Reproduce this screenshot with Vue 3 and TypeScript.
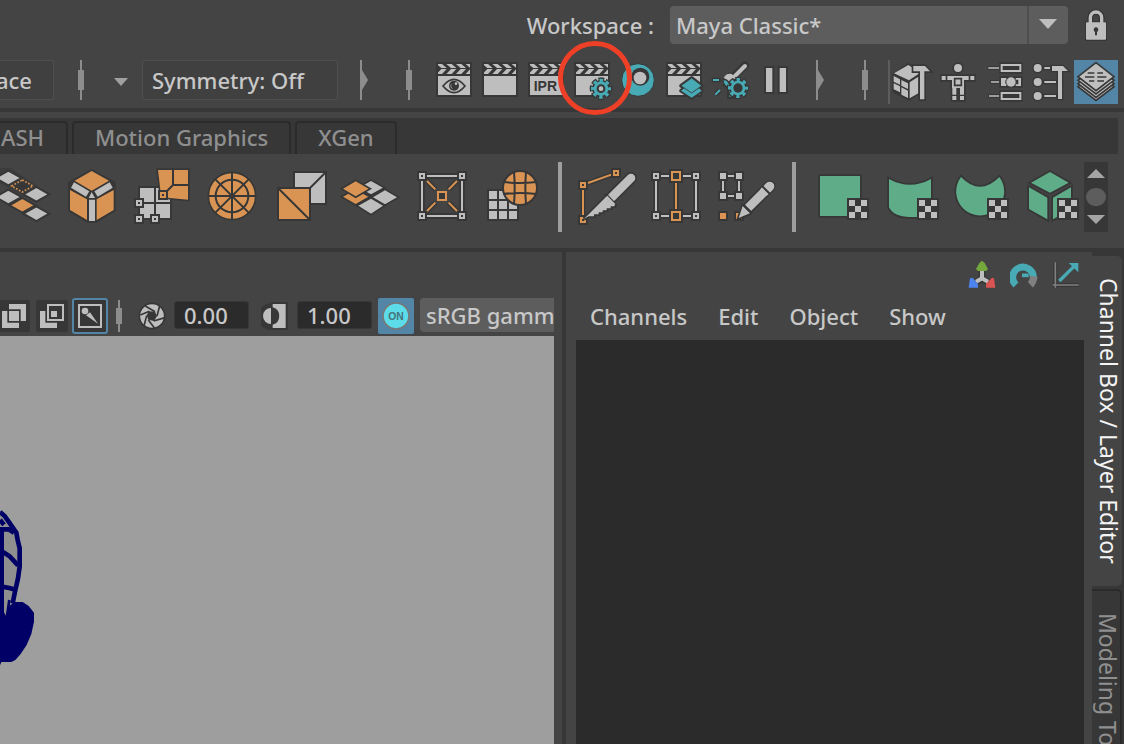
<script setup lang="ts">
import { ref } from 'vue'

const workspace = ref('Maya Classic*')
const exposure = ref('0.00')
const gamma = ref('1.00')
const colorSpace = ref('sRGB gamm')

const shelfTabs = ['ASH', 'Motion Graphics', 'XGen']
const menus = ['Channels', 'Edit', 'Object', 'Show']
const greenShapes = [
  { name: 'Planar mapping', parts: ['M36 42H156V162H36Z'] },
  { name: 'Cylindrical mapping', parts: ['M33 51Q96 86 159 51V165H96Q48 165 33 136Z'] },
  { name: 'Spherical mapping', parts: ['M39 45Q96 104 154 45A72 72 0 1 1 39 45Z'] },
  {
    name: 'Automatic mapping',
    parts: ['M96 30 152 62 96 92 39 62Z', 'M33 76 88 107V172L33 141Z', 'M105 107 159 76V141L105 172Z'],
  },
]
const corners = [[36, 42], [156, 42], [36, 162], [156, 162]]
const diamonds = [
  [55, 48, 'lt'], [139, 97, 'lt'], [55, 105, 'lt'], [97, 130, 'or'], [139, 155, 'lt'],
]
</script>

<template>
  <svg class="defs" aria-hidden="true">
    <defs>
      <clipPath id="slate"><path d="M21 12H117V42H21Z" /></clipPath>
      <symbol id="clapper" viewBox="0 0 138 132">
        <path class="dk" d="M15 6H123V111H15Z" />
        <path class="lt" d="M21 48H117V105H21Z" />
        <g clip-path="url(#slate)">
          <path
            v-for="a in [-12, 17, 46, 75, 104]"
            :key="a"
            class="lt"
            :d="`M${a} 12h16l14 12h-16zM${a + 14} 27h16l-14 15h-16z`"
          />
        </g>
      </symbol>
      <symbol id="gear" viewBox="-40 -40 80 80">
        <circle class="dk" r="27" />
        <circle r="25" fill="none" stroke="#373737" stroke-width="18" stroke-dasharray="15 4.63" stroke-dashoffset="7.5" />
        <circle class="tl" r="22" />
        <circle r="25" fill="none" stroke="#48aab5" stroke-width="10" stroke-dasharray="10 9.63" stroke-dashoffset="5" />
      </symbol>
      <symbol id="checker" viewBox="0 0 66 66">
        <path class="dk" d="M0 0H66V66H0Z" />
        <path class="lt" d="M6 6h18v18H6zM42 6h18v18H42zM24 24h18v18H24zM6 42h18v18H6zM42 42h18v18H42z" />
      </symbol>
    </defs>
  </svg>

  <main class="app">
    <header class="workspace-bar">
      <label for="workspace">Workspace :</label>
      <div class="workspace-pick">
        <select id="workspace" v-model="workspace">
          <option>Maya Classic*</option>
        </select>
      </div>
      <button class="lock" aria-label="Lock workspace">
        <svg viewBox="0 0 72 96" width="24" height="32">
          <path d="M19 42V26a17 17 0 0 1 34 0V42" fill="none" stroke="#373737" stroke-width="18" />
          <path class="dk" d="M3 37H69V96H3Z" />
          <path d="M19 44V26a17 17 0 0 1 34 0V44" fill="none" stroke="#bebebe" stroke-width="10" />
          <rect class="lt" x="6" y="40" width="60" height="52" rx="3" />
          <circle class="dk" cx="36" cy="62" r="7" /><path class="dk" d="M33 64h6v15h-6z" />
        </svg>
      </button>
    </header>

    <section class="status-line" aria-label="Status line">
      <button class="box space">ace</button>
      <i class="handle"></i>
      <i class="caret"></i>
      <button class="box symmetry">Symmetry: Off</button>
      <i class="collapse"></i>
      <i class="handle second"></i>
      <div class="tools render">
        <button aria-label="Render view">
          <svg viewBox="0 0 138 132"><use href="#clapper" />
            <path d="M36 78Q69 38 102 78Q69 118 36 78Z" fill="none" stroke="#373737" stroke-width="5" />
            <circle class="dk" cx="69" cy="77" r="15" /><circle class="lt" cx="75" cy="71" r="4" />
            <path d="M60 73q-3 8 4 13" fill="none" stroke="#bebebe" stroke-width="2" />
          </svg>
        </button>
        <button aria-label="Render frame"><svg viewBox="0 0 138 132"><use href="#clapper" /></svg></button>
        <button aria-label="IPR render">
          <svg viewBox="0 0 138 132"><use href="#clapper" /><text x="32" y="92" class="ipr">IPR</text></svg>
        </button>
        <button class="marked" aria-label="Render settings">
          <svg viewBox="0 0 138 132"><use href="#clapper" />
            <use href="#gear" x="56" y="46" width="80" height="80" />
            <circle class="dk" cx="96" cy="86" r="13" /><circle class="lt" cx="96" cy="86" r="7" />
          </svg>
          <span class="ring"></span>
        </button>
        <button aria-label="Hypershade">
          <svg viewBox="0 0 138 132">
            <circle class="tl" cx="69" cy="60" r="49" stroke="#373737" stroke-width="3" />
            <circle class="dk" cx="76" cy="50" r="27" /><circle class="lt" cx="75" cy="54" r="19" />
          </svg>
        </button>
        <button aria-label="Render setup">
          <svg viewBox="0 0 138 132"><use href="#clapper" />
            <g stroke="#373737" stroke-width="11" stroke-linejoin="round">
              <path class="dk" d="M60 92 70 85 92 100 114 85 122 92 92 113Z" />
              <path class="dk" d="M92 54 122 77 92 99 60 77Z" />
            </g>
            <path class="tl" d="M60 92 70 85 92 100 114 85 122 92 92 113Z" />
            <path class="tl" d="M92 54 122 77 92 99 60 77Z" stroke="#373737" stroke-width="2" />
          </svg>
        </button>
        <button aria-label="Light editor">
          <svg viewBox="0 0 138 132">
            <path d="M114 16 82 48" stroke="#373737" stroke-width="24" stroke-linecap="round" />
            <path class="dk" d="M14 53H42V67H14ZM46 56 66 36 98 58 90 72 65 88 48 78Z" />
            <path d="M26 104 39 90" stroke="#373737" stroke-width="15" />
            <path class="dk" d="M60 76H88V117H60Z" />
            <path d="M114 18 84 48" stroke="#bebebe" stroke-width="12" stroke-linecap="round" />
            <path class="lt" d="M50 54Q58 38 74 42L90 56Q76 52 69 67Q60 56 50 54Z" />
            <path class="tl" d="M50 61Q61 61 66 74L62 80Q50 74 50 61ZM67 84h5v5h-5zM67 93h5v5h-5zM67 105h8v5h-8z" />
            <path d="M18 60H36M25 104 39 90" stroke="#48aab5" stroke-width="6" />
            <use href="#gear" x="53" y="44" width="80" height="80" />
            <circle class="dk" cx="93" cy="84" r="14" />
          </svg>
        </button>
        <button aria-label="Pause viewport">
          <svg viewBox="0 0 138 132">
            <path class="lt" stroke="#373737" stroke-width="12" paint-order="stroke" d="M39 24H58V96H39ZM80 24H99V96H80Z" />
          </svg>
        </button>
      </div>
      <i class="collapse after"></i>
      <i class="handle third"></i>
      <div class="tools editors">
        <button aria-label="Modeling toolkit">
          <svg viewBox="0 0 138 132">
            <path d="M14 44 58 14 90 30V100L60 118 14 94Z" class="dk" stroke="#373737" stroke-width="8" />
            <path class="lt" d="M15 40 58 15 94 38 60 61ZM14 48 33 58V74L14 65ZM37 60 57 70V87L37 77ZM14 70 33 79V97L14 88ZM37 82 57 92V114L37 104ZM62 67 88 50V100L62 115Z" />
            <path class="lt" stroke="#373737" stroke-width="10" paint-order="stroke" d="M73 18H108L123 34H106V118H93V34H73Z" />
          </svg>
        </button>
        <button aria-label="Character controls">
          <svg viewBox="0 0 138 132">
            <g stroke="#373737" stroke-width="10" paint-order="stroke" class="lt">
              <circle cx="69" cy="24" r="12" />
              <path d="M20 48H32V60H20ZM106 48H118V60H106ZM37 48H101V60H87V84H51V60H37ZM52 84H64V104H52ZM75 84H87V104H75ZM52 108H64V120H52ZM75 108H87V120H75Z" />
            </g>
            <path d="M59 56H79V76H59Z" fill="#bebebe" stroke="#373737" stroke-width="5" />
          </svg>
        </button>
        <button aria-label="Attribute editor">
          <svg viewBox="0 0 138 132">
            <g fill="none">
              <path d="M20 24H54M28 66H54M22 108H54" stroke="#373737" stroke-width="12" />
              <path class="dk" d="M55 7H125V41H55ZM55 49H125V83H55ZM55 91H125V125H55Z" />
              <path d="M22 24H54M30 66H54M24 108H54" stroke="#bebebe" stroke-width="5" />
              <path d="M62 15H118V33H62ZM62 99H118V117H62Z" stroke="#bebebe" stroke-width="6" />
            </g>
            <path class="lt" d="M60 54H76V61H73V71H76V78H60ZM120 54H104V59H112V73H104V78H120Z" />
            <circle class="lt" cx="90" cy="66" r="14" />
          </svg>
        </button>
        <button aria-label="Tool settings">
          <svg viewBox="0 0 138 132">
            <g class="lt" stroke="#373737" stroke-width="8" paint-order="stroke">
              <circle cx="32" cy="24" r="12" /><circle cx="32" cy="66" r="12" /><circle cx="32" cy="108" r="12" />
              <path d="M52 21H69V27H52ZM52 63H87V69H52ZM52 105H87V111H52Z" />
              <path d="M75 18H108L123 33H105V117H93V33H75Z" />
            </g>
          </svg>
        </button>
        <button class="selected" aria-label="Channel box">
          <svg viewBox="0 0 138 132">
            <g class="lt" stroke="#373737" stroke-width="5">
              <path d="M69 40 123 80 69 121 15 80Z" /><path d="M69 30 123 71 69 112 15 71Z" />
              <path d="M69 20 123 61 69 102 15 61Z" /><path d="M69 8 123 50 69 92 15 50Z" />
            </g>
            <path d="M44 39H64M73 39H90M36 51H64M73 51H100M48 63H64M73 63H93" stroke="#373737" stroke-width="5" />
          </svg>
        </button>
      </div>
    </section>

    <nav class="shelf-tabs" aria-label="Shelves">
      <button v-for="tab in shelfTabs" :key="tab">{{ tab }}</button>
    </nav>

    <section class="shelf" aria-label="Shelf tools">
      <div class="group">
        <button class="cut" aria-label="Quad patch">
          <svg viewBox="30 0 162 210" stroke="#373737" stroke-width="6">
            <path class="dk" d="M25 18H62L178 96 139 122 97 100 25 60Z" stroke="none" opacity=".6" />
            <path v-for="d in diamonds" :key="`${d[0]}-${d[1]}`" :class="d[2]" :d="`M${d[0]} ${Number(d[1]) - 22}l39 22l-39 22l-39-22z`" />
            <path d="M97 54 129 72 97 90 65 72Z" fill="#373737" stroke="#d99453" stroke-width="5" stroke-dasharray="5 5" />
          </svg>
        </button>
        <button aria-label="Bevel">
          <svg viewBox="0 0 192 210">
            <path class="dk" d="M95 21 167 60V147L108 183H84L24 147V60Z" />
            <path class="or" d="M95 27 147 56 95 86 44 56ZM30 84 81 112V174L30 144ZM110 112 161 84V144L110 174Z" />
            <path class="lt" d="M42 61 88 88 78 104 33 77ZM149 61 103 88 113 104 158 77ZM87 113H105V177H87ZM95 90 105 108H86Z" />
          </svg>
        </button>
        <button aria-label="Target weld">
          <svg viewBox="0 0 192 210">
            <path class="dk" d="M24 72H126V174H24Z" />
            <path class="lt" d="M30 78H72V120H30ZM78 78H120V120H78ZM30 126H72V168H30ZM78 126H120V168H78Z" />
            <path class="or" stroke="#373737" stroke-width="10" paint-order="stroke" d="M84 24H174V113L112 107 92 92Z" />
            <path d="M129 24V69L105 93M129 69H174" fill="none" stroke="#373737" stroke-width="6" />
            <g fill="#373737"><path d="M84 84H114V114H84ZM12 108H42V138H12ZM12 156H42V186H12ZM60 156H90V186H60Z" /></g>
            <path d="M93 93H105V105H93Z" fill="#373737" stroke="#d99453" stroke-width="6" />
            <path d="M21 117H33V129H21ZM21 165H33V177H21ZM69 165H81V177H69Z" fill="#373737" stroke="#bebebe" stroke-width="6" />
          </svg>
        </button>
        <button aria-label="Circularize">
          <svg viewBox="0 0 192 210">
            <circle class="or" cx="96" cy="102" r="71" stroke="#373737" stroke-width="5" />
            <circle cx="96" cy="102" r="49" fill="none" stroke="#373737" stroke-width="6" />
            <path d="M96 31V173M25 102H167M46 52 146 152M146 52 46 152" stroke="#373737" stroke-width="6" />
          </svg>
        </button>
        <button aria-label="Triangulate">
          <svg viewBox="0 0 192 210" stroke="#373737" stroke-width="6">
            <path class="lt" d="M72 30H168V126H72Z" /><path d="M168 30 120 78" />
            <path class="or" d="M24 78H120V174H24Z" /><path d="M24 78 120 174" />
          </svg>
        </button>
        <button aria-label="Duplicate face">
          <svg viewBox="0 0 192 210" stroke="#373737" stroke-width="5">
            <path class="lt" d="M93 54 134 77 93 100 52 77ZM135 82 176 106 135 130 94 106ZM93 107 134 131 93 158 50 131Z" />
            <path class="or" d="M47 80 90 104 47 129 4 104Z" /><path class="or" d="M47 55 91 80 47 106 4 80Z" />
          </svg>
        </button>
        <button aria-label="Merge to center">
          <svg viewBox="0 0 192 210">
            <path d="M36 42H156V162H36Z" fill="none" stroke="#373737" stroke-width="18" />
            <path d="M36 42H156V162H36Z" fill="none" stroke="#bebebe" stroke-width="6" />
            <path d="M51 57 76 82M141 57 116 82M51 147 76 122M141 147 116 122" stroke="#373737" stroke-width="15" />
            <path d="M51 57 76 82M141 57 116 82M51 147 76 122M141 147 116 122" stroke="#d99453" stroke-width="6" />
            <path v-for="c in corners" :key="c.join()" class="dk" :d="`M${c[0] - 15} ${c[1] - 15}h30v30h-30z`" />
            <path v-for="c in corners" :key="c.join()" fill="#373737" stroke="#bebebe" stroke-width="6" :d="`M${c[0] - 6} ${c[1] - 6}h12v12h-12z`" />
            <path d="M84 90H108V114H84Z" fill="#373737" stroke="#d99453" stroke-width="6" />
          </svg>
        </button>
        <button aria-label="Smooth">
          <svg viewBox="0 0 192 210">
            <path class="dk" d="M21 81H117V177H21Z" />
            <path class="lt" d="M27 87h24v24H27zM57 87h24v24H57zM87 87h24v24H87zM27 117h24v24H27zM57 117h24v24H57zM87 117h24v24H87zM27 147h24v24H27zM57 147h24v24H57zM87 147h24v24H87z" />
            <circle class="or" cx="120" cy="78" r="51" stroke="#373737" stroke-width="6" />
            <path d="M102 29Q106 78 102 127M138 29Q134 78 138 127M71 60Q120 66 169 60M71 96Q120 90 169 96" fill="none" stroke="#373737" stroke-width="6" />
          </svg>
        </button>
      </div>
      <i class="divider"></i>
      <div class="group">
        <button aria-label="Multi-cut">
          <svg viewBox="0 0 192 210">
            <path d="M27 84V160M42 63 112 38" stroke="#373737" stroke-width="15" />
            <path d="M27 84V160M42 63 112 38" stroke="#d99453" stroke-width="6" />
            <path class="dk" d="M12 54h30v30H12zM111 18h30v30h-30zM12 159h30v30H12z" />
            <path d="M21 63h12v12H21zM120 27h12v12h-12zM21 168h12v12H21z" fill="#373737" stroke="#d99453" stroke-width="6" />
            <path class="lt" stroke="#373737" stroke-width="10" paint-order="stroke" d="M30 171 98 103 122 127V133H110V139H98V145H86V151H74V157H60V163H44Z" />
            <path d="M171 48 116 103" stroke="#373737" stroke-width="36" stroke-linecap="round" />
            <path d="M171 48 113 106" stroke="#bebebe" stroke-width="26" stroke-linecap="round" />
            <path d="M93 95 128 130" stroke="#373737" stroke-width="7" /><path class="lt" d="M94 107 100 101 124 126 118 132Z" />
          </svg>
        </button>
        <button aria-label="Insert edge loop">
          <svg viewBox="0 0 192 210">
            <path d="M36 42H156V162H36ZM96 42V162" fill="none" stroke="#373737" stroke-width="16" />
            <path class="panel" d="M48 54H84V150H48ZM108 54H144V150H108Z" />
            <path d="M36 57V147M156 57V147M51 42H75M117 42H141M51 162H75M117 162H141" stroke="#bebebe" stroke-width="6" />
            <path d="M96 62V142" stroke="#d99453" stroke-width="6" />
            <path v-for="c in corners" :key="c.join()" class="dk" :d="`M${c[0] - 15} ${c[1] - 15}h30v30h-30z`" />
            <path v-for="c in corners" :key="c.join()" fill="#373737" stroke="#bebebe" stroke-width="6" :d="`M${c[0] - 6} ${c[1] - 6}h12v12h-12z`" />
            <path class="dk" d="M75 21H117V63H75ZM75 141H117V183H75Z" />
            <path d="M84 30H108V54H84ZM84 150H108V174H84Z" fill="#373737" stroke="#d99453" stroke-width="6" />
          </svg>
        </button>
        <button aria-label="Quad draw">
          <svg viewBox="0 0 192 210">
            <path d="M27 42H75V102H27Z" fill="none" stroke="#373737" stroke-width="16" />
            <path class="dk" d="M12 27H42V57H12ZM60 27H90V57H60ZM12 87H42V117H12ZM60 87H90V117H60ZM12 147H42V177H12ZM60 147H90V177H60Z" />
            <path d="M27 57V87M75 57V87M42 42H60M42 102H60" stroke="#bebebe" stroke-width="6" />
            <path class="lt" d="M18 33H36V51H18ZM66 33H84V51H66ZM18 93H36V111H18ZM66 93H84V111H66Z" />
            <path class="or" d="M18 153H36V171H18ZM66 153H84V171H66Z" />
            <path d="M167 73 103 137" stroke="#373737" stroke-width="36" stroke-linecap="round" />
            <path class="lt" d="M74 168 86 132 108 154Z" stroke="#373737" stroke-width="10" paint-order="stroke" />
            <path d="M167 73 152 88" stroke="#bebebe" stroke-width="28" stroke-linecap="round" />
            <path d="M154 86 102 138" stroke="#bebebe" stroke-width="26" />
            <path d="M144 72 168 96M88 128 112 152" stroke="#373737" stroke-width="6" />
          </svg>
        </button>
      </div>
      <i class="divider"></i>
      <div class="group">
        <button v-for="shape in greenShapes" :key="shape.name" :aria-label="shape.name">
          <svg viewBox="0 0 192 210">
            <path v-for="p in shape.parts" :key="p" class="gr" stroke="#373737" stroke-width="11" paint-order="stroke" :d="p" />
            <use href="#checker" x="117" y="108" width="66" height="66" />
          </svg>
        </button>
      </div>
      <div class="scroller">
        <button aria-label="Previous shelf row"><i class="up"></i></button>
        <i class="thumb"></i>
        <button aria-label="Next shelf row"><i class="down"></i></button>
      </div>
    </section>

    <div class="work">
      <section class="view-panel">
        <div class="view-bar">
          <button class="vb first" aria-label="Shaded">
            <svg viewBox="0 0 90 96"><path class="lt" d="M6 33H22V68H57V84H6Z" /><path class="lt" d="M27 33H57V63H27Z" /><path class="lt" d="M27 12H78V63H62V28H27Z" /></svg>
          </button>
          <button class="vb" aria-label="Textured">
            <svg viewBox="0 0 96 96"><path class="lt" d="M12 33H28V68H63V84H12Z" /><path d="M36 15H81V60H36Z" fill="none" stroke="#bebebe" stroke-width="6" /><path class="lt" d="M45 33H63V51H45Z" /></svg>
          </button>
          <button class="vb picked" aria-label="Isolate select">
            <svg viewBox="0 0 108 108">
              <path d="M21 21H87V87H21Z" fill="none" stroke="#bebebe" stroke-width="6" />
              <circle class="lt" cx="39" cy="39" r="10" /><path class="lt" d="M42 52 54 43 78 77Z" />
            </svg>
          </button>
          <i class="handle small"></i>
          <button class="glyph" aria-label="Reset exposure">
            <svg viewBox="0 0 84 84">
              <circle class="lt" cx="42" cy="42" r="38" stroke="#373737" stroke-width="5" />
              <path class="dk" d="M33 28 51 29 57 43 48 57 31 53 26 40Z" />
              <path d="M51 29 22 12M57 42 65 12M47 57 81 47M31 54 51 80M26 41 18 72M34 28 7 39" stroke="#373737" stroke-width="5" />
            </svg>
          </button>
          <input v-model="exposure" class="num" aria-label="Exposure" />
          <button class="glyph contrast" aria-label="Reset gamma">
            <svg viewBox="0 0 84 84">
              <path class="dk" d="M30 0H80V84H30A40 40 0 0 1 30 4Z" />
              <path class="lt" d="M30 18V66A24 24 0 0 1 30 18ZM35 6H74V78H35V68A27 27 0 0 0 35 16Z" />
            </svg>
          </button>
          <input v-model="gamma" class="num" aria-label="Gamma" />
          <button class="on" aria-label="Color management">
            <svg viewBox="0 0 108 108"><circle cx="54" cy="54" r="39" fill="#5bdce8" stroke="#777" stroke-width="5" /><text x="54" y="65" text-anchor="middle">ON</text></svg>
          </button>
          <select v-model="colorSpace" class="space-pick" aria-label="View transform"><option>sRGB gamm</option></select>
        </div>
        <div class="viewport">
          <svg viewBox="0 0 120 570" width="40" height="190">
            <path d="M0 62Q40 90 57 140L60 230 40 310 20 380H0Z" fill="#8f8f8f" />
            <g fill="none" stroke="#000066" stroke-width="14">
              <path d="M0 66 14 78 28 98 40 115 49 128 53 150 59 175V230L54 265 45 305 38 340" />
              <path d="M0 90 12 104M5 120V390M0 118H26L42 128M5 184 28 198 54 226M5 290 28 294 50 300" />
              <path d="M28 330 20 385" stroke-width="8" />
            </g>
            <path d="M0 345 18 378 26 350 42 336H68L86 348 102 368V395L94 432 80 465 62 492 46 510 34 516H4L0 526Z" fill="#000066" />
          </svg>
        </div>
      </section>

      <section class="channel-panel">
        <div class="channel-main">
          <div class="manip">
            <button aria-label="Manipulator">
              <svg viewBox="0 0 84 90">
                <path d="M42 35V60L20 70M42 60 64 70" fill="none" stroke="#373737" stroke-width="20" /><path d="M42 35V58L24 68M42 58 60 68" fill="none" stroke="#bebebe" stroke-width="12" />
                <path d="M24 30 34 12 42 5 50 12 60 30 54 36H30Z" fill="#74a83c" /><path d="M6 58 14 56 30 76V86H2Z" fill="#4d83ee" /><path d="M78 58 72 56 54 74V86H82Z" fill="#d95450" />
              </svg>
            </button>
            <button aria-label="Speed">
              <svg viewBox="0 0 84 90">
                <path d="M18 78A31 31 0 1 1 70 56" fill="none" stroke="#48aab5" stroke-width="21" /><path d="M72 52Q69 70 61 77" fill="none" stroke="#808080" stroke-width="22" />
                <path d="M36 49H56" stroke="#48aab5" stroke-width="11" />
              </svg>
            </button>
            <button aria-label="Hyperbolic">
              <svg viewBox="0 0 84 90">
                <path d="M10 10V86M2 78H80" stroke="#373737" stroke-width="12" /><path d="M10 10V86M2 78H80" stroke="#808080" stroke-width="5" />
                <path d="M22 66 66 22" stroke="#48aab5" stroke-width="10" /><path d="M50 12H79V40Z" fill="#48aab5" />
              </svg>
            </button>
          </div>
          <nav class="menu"><button v-for="m in menus" :key="m">{{ m }}</button></nav>
          <div class="channels"></div>
        </div>
        <nav class="side-tabs" aria-label="Side panels">
          <button class="active">Channel Box / Layer Editor</button>
          <button>Modeling To</button>
        </nav>
      </section>
    </div>
  </main>
</template>

<style>
body { margin: 0; background: #444; overflow: hidden; }
</style>

<style scoped>
.app {
  height: 100vh;
  display: flex;
  flex-direction: column;
  overflow: hidden;
  background: #444;
  color: #c8c8c8;
  font: 500 22px/30px "Noto Sans", "Open Sans", sans-serif;
}
.defs { position: absolute; width: 0; height: 0; }
button, select, input {
  margin: 0; padding: 0; border: 0; border-radius: 0; background: none;
  color: inherit; font: inherit; appearance: none; outline: 0; box-sizing: border-box;
}
svg { display: block; }
i { display: block; flex: none; }
.lt { fill: #bebebe; }
.dk { fill: #373737; }
.tl { fill: #48aab5; }
.or { fill: #d99453; }
.gr { fill: #5fac89; }
.panel { fill: #444; }

.workspace-bar {
  flex: none; display: flex; align-items: center; justify-content: flex-end;
  gap: 16px; padding: 6px 16px 0 0;
}
.workspace-pick { position: relative; width: 398px; }
.workspace-pick select {
  display: block; width: 100%; height: 38px; padding: 0 46px 0 6px;
  background: #5d5d5d; border-radius: 4px;
}
.workspace-pick::before {
  content: ""; position: absolute; right: 39px; top: 0; bottom: 0; width: 2px; background: #4e4e4e;
}
.workspace-pick::after {
  content: ""; position: absolute; right: 11px; top: 13px; pointer-events: none;
  border: 9px solid transparent; border-top: 10px solid #bebebe; border-bottom: 0;
}
.lock { width: 24px; }

.status-line {
  flex: none; display: flex; align-items: flex-start; height: 44px;
  padding: 16px 0 4px; border-bottom: 4px solid #373737;
}
.box {
  height: 40px; border: 1px solid #4f4f4f; border-radius: 3px;
  background: #404040; text-align: left; flex: none;
}
.space {
  display: flex; align-items: center; justify-content: flex-end;
  width: 54px; margin-right: 24px; padding-right: 21px; border-left: 0; border-radius: 0 3px 3px 0;
}
.symmetry { width: 196px; padding-left: 9px; margin-right: 22px; }
.handle {
  width: 6px; height: 40px;
  background: linear-gradient(#8d8d8d, #8d8d8d) center / 6px 20px no-repeat,
    linear-gradient(#8d8d8d, #8d8d8d) center / 2px 100% no-repeat;
}
.caret { margin: 18px 14px 0 30px; border: 7px solid transparent; border-top: 8px solid #a0a0a0; border-bottom: 0; }
.collapse {
  width: 8px; height: 40px; background: #8d8d8d;
  clip-path: polygon(0 0, 2px 0, 2px 10px, 8px 20px, 2px 30px, 2px 40px, 0 40px);
}
.handle.second { margin: 0 19px 0 38px; }
.collapse.after { margin-left: 17px; }
.handle.third { margin: 0 20px 0 38px; }
.tools { display: flex; flex: none; }
.tools button { width: 46px; height: 44px; flex: none; }
.tools svg { width: 46px; height: 44px; }
.editors { padding-left: 1px; background: linear-gradient(#5d5d5d, #5d5d5d) left / 2px 100% no-repeat; }
.tools .selected { background: linear-gradient(#5285a6, #5285a6) center / 44px 44px no-repeat; }
.marked { position: relative; z-index: 2; }
.ring {
  position: absolute; left: -11px; top: -19px; width: 74px; height: 74px;
  box-sizing: border-box; border: 5px solid #ee3f27; border-radius: 50%;
}
.ipr { font: 700 42px "Liberation Sans", sans-serif; fill: #373737; }

.shelf-tabs {
  flex: none; display: flex; gap: 4px; height: 36px; margin: 6px 6px 0 0;
  background: #373737; align-items: flex-end;
}
.shelf-tabs button {
  height: 33px; padding: 0 21px 3px; color: #8f8f8f;
  border: 2px solid #2b2b2b; border-bottom: 0; border-radius: 4px 4px 0 0; line-height: 28px;
}
.shelf-tabs button:first-child { padding: 0 22px 3px 1px; border-left: 0; border-top-left-radius: 0; }
.shelf {
  flex: none; display: flex; padding: 8px 0 16px; border-bottom: 4px solid #373737;
}
.group { display: flex; gap: 6px; flex: none; }
.group button, .group svg { width: 64px; height: 70px; }
.group .cut, .group .cut svg { width: 54px; }
.divider { width: 4px; height: 70px; margin: 0 12px 0 14px; background: #9e9e9e; }
.scroller {
  display: flex; flex-direction: column; align-items: center; justify-content: space-between;
  width: 24px; height: 70px; margin-left: 2px; padding: 7px 0 8px; box-sizing: border-box; background: #373737;
}
.up { border: 9px solid transparent; border-bottom-color: #a5a5a5; border-top: 0; }
.down { border: 9px solid transparent; border-top-color: #a5a5a5; border-bottom: 0; }
.thumb { width: 20px; height: 18px; border-radius: 9px; background: #5d5d5d; }

.work { flex: 1; min-height: 0; display: flex; }
.view-panel {
  flex: 1 1 566px; min-width: 0; box-sizing: border-box; display: flex; flex-direction: column;
  padding-right: 8px; border-right: 4px solid #373737; overflow: hidden;
}
.view-bar { display: flex; align-items: center; height: 36px; padding: 46px 0 2px; overflow: hidden; flex: none; }
.view-bar > * { flex: none; }
.vb { width: 32px; height: 32px; background: #373737; border-radius: 3px; margin-right: 4px; }
.first { width: 30px; margin-right: 6px; border-radius: 0 3px 3px 0; }
.picked { width: 36px; height: 36px; border: 2px solid #5285a6; margin-right: 8px; }
.picked svg { margin: -2px; width: 36px; height: 36px; }
.handle.small { height: 32px; background-size: 6px 16px, 2px 100%; margin-right: 16px; }
.glyph { width: 28px; height: 28px; margin-right: 8px; }
.num { width: 75px; height: 28px; margin: 0 12px 3px 0; padding-left: 9px; background: #2b2b2b; border: 1px solid #373737; border-radius: 3px; }
.contrast { margin-right: 8px; }
.contrast + .num { margin-right: 6px; }
.on { width: 36px; height: 36px; background: #5285a6; border-radius: 2px; margin-right: 6px; }
.on text { font: 700 31px "Liberation Sans", sans-serif; fill: #47717a; }
.view-bar .space-pick { flex: 1 0 134px; height: 34px; margin-bottom: 2px; padding-left: 6px; background: #5d5d5d; border-radius: 4px 0 0 4px; }
.viewport { flex: 1; min-height: 0; background: #9e9e9e; padding-top: 154px; overflow: hidden; }

.channel-panel { flex: 1 1 558px; min-width: 0; display: flex; }
.channel-main { flex: 1; min-width: 0; display: flex; flex-direction: column; padding: 0 8px 0 10px; }
.manip { display: flex; justify-content: flex-end; gap: 14px; padding: 7px 4px 0 0; }
.manip button, .manip svg { width: 28px; height: 30px; }
.menu { display: flex; gap: 31px; padding: 12px 14px 9px; }
.channels { flex: 1; background: #2b2b2b; }
.side-tabs { width: 32px; flex: none; background: #373737; padding-top: 4px; overflow: hidden; display: flex; flex-direction: column; gap: 3px; }
.side-tabs button {
  flex: none; width: 30px; padding: 22px 0 22px 4px; writing-mode: vertical-rl; color: #8f8f8f; text-align: left;
  border: 2px solid #2b2b2b; border-left: 0; border-radius: 0 5px 5px 0;
  font-size: 23px; font-weight: 400; line-height: 24px; white-space: nowrap;
}
.side-tabs .active { border: 0; background: #444; color: #f4f4f4; line-height: 26px; }
</style>
